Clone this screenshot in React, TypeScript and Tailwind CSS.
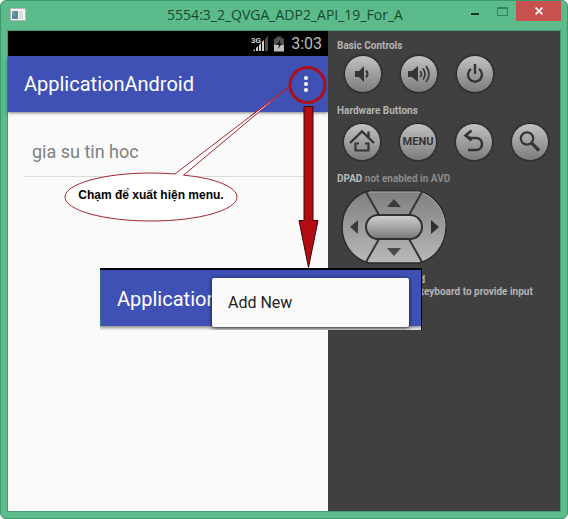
import type { ReactNode } from "react";

function TitleBar() {
  return (
    <header className="grid h-[30px] grid-cols-[1fr_auto_1fr] items-start pl-0.5">
      <svg className="mt-[7px]" width="16" height="13" viewBox="0 0 16 13" aria-hidden="true">
        <rect x="0.5" y="0.5" width="15" height="12" fill="#f4f5f4" stroke="#b5b9b6" />
        <rect x="2" y="3" width="6" height="8" fill="#538b98" />
        <rect x="2" y="3" width="3" height="5" fill="#6d9aa8" />
        <rect x="9" y="3" width="4" height="8" fill="#dadfe1" />
      </svg>
      <h1 className="mt-1 font-['Open_Sans',sans-serif] text-sm leading-5 text-[#17492f]">
        5554:3_2_QVGA_ADP2_API_19_For_A
      </h1>
      <div className="-mr-px flex justify-end">
        <button aria-label="Minimize" className="flex h-5 w-7 items-center justify-center">
          <svg width="10" height="12" viewBox="0 0 10 12">
            <rect x="1" y="8" width="8" height="2" fill="#14301f" />
          </svg>
        </button>
        <button aria-label="Maximize" className="flex h-5 w-[27px] items-center justify-center">
          <svg width="11" height="9" viewBox="0 0 11 9">
            <path d="M.5 .5H10.5V8.5H.5ZM.5 1.5H10.5" fill="none" stroke="#2c8356" />
          </svg>
        </button>
        <button aria-label="Close" className="flex h-5 w-[45px] items-center justify-center bg-[#c8504f]">
          <svg width="8" height="8" viewBox="0 0 8 8">
            <path d="M.6 .6 7.4 7.4M7.4 .6 .6 7.4" stroke="#fff" strokeWidth="1.7" />
          </svg>
        </button>
      </div>
    </header>
  );
}

function StatusBar() {
  return (
    <div className="flex h-[25px] items-center justify-end bg-black pr-1.5 font-[Roboto,sans-serif] text-[#bebebe]">
      <svg width="18" height="17" viewBox="0 0 18 17" role="img" aria-label="3G signal">
        <text x="0" y="8" fill="#d0d0d0" fontSize="8" fontWeight="700" fontFamily="Roboto">3G</text>
        <path d="M2 16 4 14V16ZM5 16V13L7 11V16ZM8 16V10L10 8V16ZM11 16V7L13 5V16Z" fill="#d0d0d0" />
        <path d="M14 16V4L17 1V16Z" fill="#4c4c4c" />
      </svg>
      <svg className="mr-1.5 ml-1" width="12" height="16" viewBox="0 0 12 16" role="img" aria-label="Charging">
        <path d="M3.5 .5H8.5V2.5H11V9H1V2.5H3.5Z" fill="#555" />
        <path d="M1 9H11V15.5H1Z" fill="#bebebe" />
        <path d="M7.5 3 3.5 9H6L5 13 9 7.5H6.5Z" fill="#111" />
      </svg>
      <span className="text-base leading-6">3:03</span>
    </div>
  );
}

function Phone() {
  return (
    <main className="flex w-80 flex-none flex-col bg-[#fafafa] font-[Roboto,sans-serif]">
      <StatusBar />
      <div className="flex h-14 items-center justify-between bg-[#3f51b5] pr-2 pl-4 shadow-[0_1px_3px_rgba(0,0,0,0.5)]">
        <h2 className="text-xl text-white">ApplicationAndroid</h2>
        <button aria-label="More options" className="flex h-10 w-7 items-center justify-center">
          <svg width="6" height="18" viewBox="0 0 6 18" fill="#fff">
            <circle cx="3" cy="3" r="2.1" />
            <circle cx="3" cy="9" r="2.1" />
            <circle cx="3" cy="15" r="2.1" />
          </svg>
        </button>
      </div>
      <ul className="p-4">
        <li className="flex h-[49px] items-center border-b border-[#dcdcdc] px-2 text-lg text-[#808080]">
          gia su tin hoc
        </li>
      </ul>
    </main>
  );
}

function RoundButton({ label, children }: { label: string; children: ReactNode }) {
  return (
    <button
      aria-label={label}
      className="flex size-[38px] flex-none items-center justify-center rounded-full border border-[#2b2b2b] bg-linear-to-b from-[#c2c2c2] to-[#7d7d7d] text-[11px] font-bold text-[#333] shadow-[0_0_2px_#222]"
    >
      {children}
    </button>
  );
}

function Glyph({ children }: { children: ReactNode }) {
  return (
    <svg width="26" height="26" viewBox="0 0 26 26" fill="none" stroke="#353535" strokeWidth="2">
      {children}
    </svg>
  );
}

function DPad() {
  return (
    <div role="group" aria-label="DPAD" className="relative mt-[5px] ml-1 h-[74px] w-[106px]">
      <svg className="absolute inset-0" width="106" height="74" viewBox="0 0 106 74" aria-hidden="true">
        <defs>
          <linearGradient id="pad" x1="0" y1="0" x2="0" y2="1">
            <stop offset="0" stopColor="#7f7f7f" />
            <stop offset="1" stopColor="#b9b9b9" />
          </linearGradient>
          <linearGradient id="center" x1="0" y1="0" x2="0" y2="1">
            <stop offset="0" stopColor="#d2d2d2" />
            <stop offset="1" stopColor="#787878" />
          </linearGradient>
        </defs>
        <path
          d="M28 1H78C91 4 105 17 105 37S91 70 78 73H28C15 70 1 57 1 37S15 4 28 1Z"
          fill="url(#pad)"
          stroke="#292929"
          strokeWidth="1.5"
        />
        <path d="M28 2H78C90 5 104 18 104 37" fill="none" stroke="#a9a9a9" />
        <path d="M25 2 38 25M81 2 68 25M25 72 38 49M81 72 68 49" stroke="#353535" strokeWidth="2" />
        <rect x="25" y="25" width="56" height="24" rx="12" fill="url(#center)" stroke="#303030" strokeWidth="2" />
      </svg>
      <div className="relative grid h-full grid-cols-[25px_1fr_25px] grid-rows-[25px_1fr_25px]">
        <button aria-label="Up" className="col-start-2 row-start-1 flex items-center justify-center">
          <svg width="14" height="8" viewBox="0 0 14 8"><path d="M0 8 7 0 14 8Z" fill="#3c3c3c" /></svg>
        </button>
        <button aria-label="Left" className="col-start-1 row-start-2 flex items-center justify-center">
          <svg width="8" height="14" viewBox="0 0 8 14"><path d="M8 0V14L0 7Z" fill="#3c3c3c" /></svg>
        </button>
        <button aria-label="Select" className="col-start-2 row-start-2" />
        <button aria-label="Right" className="col-start-3 row-start-2 flex items-center justify-center">
          <svg width="8" height="14" viewBox="0 0 8 14"><path d="M0 0V14L8 7Z" fill="#303030" /></svg>
        </button>
        <button aria-label="Down" className="col-start-2 row-start-3 flex items-center justify-center">
          <svg width="14" height="8" viewBox="0 0 14 8"><path d="M0 0H14L7 8Z" fill="#4a4a4a" /></svg>
        </button>
      </div>
    </div>
  );
}

function Controls() {
  return (
    <aside className="min-w-0 flex-1 bg-[#404040] pt-[9px] pl-[9px] font-[Roboto,sans-serif] text-[10px] leading-3 font-bold text-[#b4b4b4]">
      <h2>Basic Controls</h2>
      <div className="mt-[3px] ml-[7px] flex gap-[18px]">
        <RoundButton label="Volume down">
          <Glyph>
            <path d="M5 10H9L14 5V21L9 16H5Z" fill="#353535" stroke="none" />
            <path d="M16 9.5Q19 13 16 16.5" />
          </Glyph>
        </RoundButton>
        <RoundButton label="Volume up">
          <Glyph>
            <path d="M2 10H6L12 5V21L6 16H2Z" fill="#353535" stroke="none" />
            <path d="M14 10Q17 13 14 16M17 7.5Q21 13 17 18.5M20 5Q26 13 20 21" strokeWidth="1.7" />
          </Glyph>
        </RoundButton>
        <RoundButton label="Power">
          <Glyph>
            <path d="M9 8A7 7 0 1 0 17 8M13 3V13" strokeWidth="2.4" />
          </Glyph>
        </RoundButton>
      </div>
      <h2 className="mt-3">Hardware Buttons</h2>
      <div className="mt-1.5 ml-1.5 flex gap-[18px]">
        <RoundButton label="Home">
          <Glyph>
            <path d="M1 14 13 2.5 25 14M19.500 8.500V2.500" strokeWidth="2.4" />
            <path d="M10 14.500H6.500V21.500H19.500V14.500H16" strokeWidth="2.2" />
          </Glyph>
        </RoundButton>
        <RoundButton label="Menu">MENU</RoundButton>
        <RoundButton label="Back">
          <Glyph>
            <path d="M10.500 1.500 4.500 6.500 10.500 11.500M5 6.500 9 9H15C23 9 23 21 15 21H7" strokeWidth="2.6" />
          </Glyph>
        </RoundButton>
        <RoundButton label="Search">
          <Glyph>
            <circle cx="10" cy="9.5" r="6.2" strokeWidth="2.2" />
            <path d="M14.5 14 22 21.5" strokeWidth="3.2" />
          </Glyph>
        </RoundButton>
      </div>
      <h2 className="mt-3 text-[#8c8c8c]">
        <span className="text-[#b9b9b9]">DPAD</span> not enabled in AVD
      </h2>
      <DPad />
      <h2 className="mt-2.5">Hardware Keyboard</h2>
      <p>Use your physical keyboard to provide input</p>
    </aside>
  );
}

function Callout() {
  return (
    <>
      <svg className="pointer-events-none absolute top-0 left-0" width="340" height="280" viewBox="0 0 340 280" aria-hidden="true">
        <path
          d="M175 174 290 86 183.500 175.200C215 178 237 187 237 197C237 210 199 221 151 221S65 210 65 197S103 173 151 173Q164 173 175 174Z"
          fill="#fff"
          stroke="#a8232f"
        />
        <path d="M250 116.500 290 86" stroke="#a8232f" />
        <circle cx="307.500" cy="85" r="17.500" fill="none" stroke="#ac1119" strokeWidth="3" />
        <path d="M304 106.500H313V220.500H318L308.500 267.500 299 220.500H304Z" fill="#b10d13" stroke="#3a0708" />
      </svg>
      <p className="absolute top-[173px] left-[65px] flex h-12 w-[172px] items-center justify-center pb-1 font-['Liberation_Sans',sans-serif] text-xs font-bold whitespace-nowrap text-black">
        Chạm để xuất hiện menu.
      </p>
    </>
  );
}

function MenuInset() {
  return (
    <section className="absolute top-[268px] left-[100px] h-[62px] w-[322px] overflow-hidden border-t-2 border-r border-black bg-[#e6e6e6] font-[Roboto,sans-serif]">
      <div className="flex h-14 items-center border-l border-[#30707c] bg-[#3f51b5] pt-0.5 pl-4 text-xl text-white shadow-[0_1px_3px_rgba(0,0,0,0.5)]">
        <span className="w-[95px] overflow-hidden">Application</span>
      </div>
      <div role="menu" className="absolute top-2 right-3 flex h-[49px] w-[197px] rounded-xs bg-[#fafafa] shadow-[0_1px_4px_rgba(0,0,0,0.8)]">
        <button role="menuitem" className="w-full px-4 text-left text-base text-[#222]">
          Add New
        </button>
      </div>
    </section>
  );
}

export default function App() {
  return (
    <div className="relative flex min-h-screen flex-col rounded-md border border-[#3d9a6b] bg-[#5bbb8a] px-[7px] pb-[7px]">
      <TitleBar />
      <div className="flex flex-1 shadow-[0_0_0_1px_#469c70]">
        <Phone />
        <Controls />
      </div>
      <div className="absolute -top-px -left-px">
        <Callout />
        <MenuInset />
      </div>
    </div>
  );
}
